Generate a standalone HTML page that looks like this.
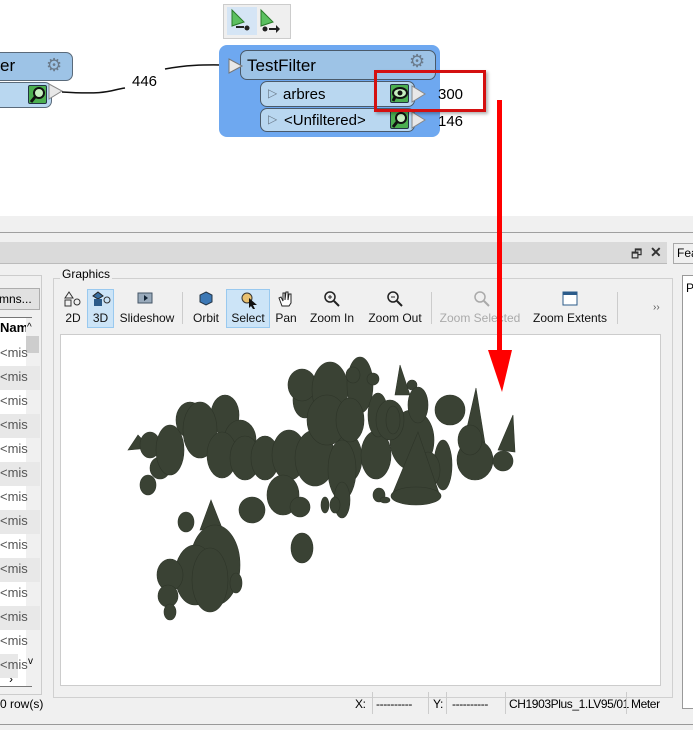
<!DOCTYPE html>
<html><head><style>
*{margin:0;padding:0;box-sizing:border-box}
body{width:693px;height:730px;overflow:hidden;background:#f0f0f0;font-family:"Liberation Sans",sans-serif;position:relative;font-size:12px;color:#000}
.a{position:absolute}
.tb{position:absolute;top:288px;height:40px;text-align:center;font-size:12px;color:#111}
.tb .l{position:absolute;bottom:3px;left:0;right:0;white-space:nowrap}
.row{position:absolute;left:0;width:40px;height:24px;font-size:13px;color:#555;padding-left:0;line-height:22px}
.st{position:absolute;top:697px;font-size:12px;letter-spacing:-0.4px;white-space:nowrap}
</style></head><body>
<!-- top canvas -->
<div class="a" style="left:0;top:0;width:693px;height:216px;background:#fff"></div>
<div class="a" style="left:0;top:232px;width:693px;height:1px;background:#a0a0a0"></div>

<!-- toolbar buttons top -->
<div class="a" style="left:223px;top:4px;width:68px;height:35px;background:#efefef;border:1px solid #ccc"></div>
<div class="a" style="left:227px;top:7px;width:30px;height:28px;background:#d5e5f5"></div>
<svg class="a" style="left:223px;top:4px" width="68" height="35">
<polygon points="9,6 21,18 9,22" fill="#5bc060" stroke="#2a7a2a"/>
<rect x="13" y="22" width="8" height="2" fill="#222"/><circle cx="24" cy="24" r="2.5" fill="#222"/>
<polygon points="38,6 50,18 38,22" fill="#5bc060" stroke="#2a7a2a"/>
<circle cx="42" cy="25" r="2.5" fill="#222"/><rect x="46" y="24" width="7" height="2" fill="#222"/><polygon points="53,21 57,25 53,29" fill="#222"/>
</svg>

<!-- left transformer -->
<div class="a" style="left:-20px;top:52px;width:93px;height:29px;background:#9dc3e6;border:1px solid #5a6a7a;border-radius:7px"></div>
<div class="a" style="left:0;top:56px;font-size:17px">er</div>
<div class="a" style="left:46px;top:55px;font-size:18px;color:#6a7a8a">⚙</div>
<div class="a" style="left:-20px;top:82px;width:72px;height:26px;background:#b9d7f0;border:1px solid #5a6a7a;border-radius:7px"></div>
<div class="a" style="left:28px;top:85px;width:19px;height:19px;background:#4caf50;border:1px solid #234;border-radius:2px"></div>
<svg class="a" style="left:28px;top:85px" width="20" height="20"><circle cx="11" cy="8" r="5" fill="#c6f0c0" stroke="#111" stroke-width="2"/><line x1="7" y1="12" x2="3" y2="17" stroke="#111" stroke-width="3"/></svg>
<svg class="a" style="left:0;top:55px" width="240" height="50">
<polygon points="49,29 62,36 49,44" fill="#e8e8e8" stroke="#888"/>
<path d="M62,37 C110,40 110,35 125,33" stroke="#111" stroke-width="1.5" fill="none"/>
<path d="M165,14 C190,9 210,10 228,10" stroke="#111" stroke-width="1.5" fill="none"/>
</svg>
<div class="a" style="left:132px;top:73px;font-size:15px">446</div>

<!-- TestFilter -->
<div class="a" style="left:219px;top:45px;width:221px;height:92px;background:#6ea8f0;border-radius:8px"></div>
<div class="a" style="left:240px;top:50px;width:196px;height:30px;background:#9dc3e6;border:1px solid #4a5a6a;border-radius:7px"></div>
<svg class="a" style="left:228px;top:58px" width="16" height="16"><polygon points="1,1 14,8 1,15" fill="#e8e8e8" stroke="#777"/></svg>
<div class="a" style="left:247px;top:56px;font-size:17px">TestFilter</div>
<div class="a" style="left:409px;top:51px;font-size:18px;color:#6a7a8a">⚙</div>
<div class="a" style="left:260px;top:81px;width:155px;height:26px;background:#b9d7f0;border:1px solid #4a5a6a;border-radius:7px"></div>
<div class="a" style="left:260px;top:108px;width:155px;height:24px;background:#b9d7f0;border:1px solid #4a5a6a;border-radius:7px"></div>
<div class="a" style="left:268px;top:86px;font-size:12px;color:#6a7a8a">▷</div>
<div class="a" style="left:283px;top:86px;font-size:15px">arbres</div>
<div class="a" style="left:268px;top:112px;font-size:12px;color:#6a7a8a">▷</div>
<div class="a" style="left:284px;top:112px;font-size:15px">&lt;Unfiltered&gt;</div>
<div class="a" style="left:390px;top:84px;width:19px;height:19px;background:#4caf50;border:1px solid #234;border-radius:2px"></div>
<svg class="a" style="left:390px;top:84px" width="20" height="20"><ellipse cx="10" cy="9" rx="7" ry="5" fill="#c6f0c0" stroke="#111" stroke-width="2"/><circle cx="10" cy="9" r="2.5" fill="#111"/><line x1="5" y1="13" x2="3" y2="17" stroke="#111" stroke-width="3"/></svg>
<div class="a" style="left:390px;top:110px;width:19px;height:19px;background:#4caf50;border:1px solid #234;border-radius:2px"></div>
<svg class="a" style="left:390px;top:110px" width="20" height="20"><circle cx="11" cy="8" r="5" fill="#c6f0c0" stroke="#111" stroke-width="2"/><line x1="7" y1="12" x2="3" y2="17" stroke="#111" stroke-width="3"/></svg>
<svg class="a" style="left:411px;top:85px" width="16" height="45"><polygon points="1,1 14,9 1,17" fill="#e8e8e8" stroke="#888"/><polygon points="1,27 14,35 1,43" fill="#e8e8e8" stroke="#888"/></svg>
<div class="a" style="left:438px;top:86px;font-size:15px">300</div>
<div class="a" style="left:438px;top:113px;font-size:15px">146</div>

<!-- panel title bar -->
<div class="a" style="left:0;top:242px;width:667px;height:22px;background:#dadada;border-bottom:1px solid #bbb"></div>
<div class="a" style="left:631px;top:245px;font-size:12px;color:#333">🗗</div>
<div class="a" style="left:650px;top:244px;font-size:14px;color:#333;font-weight:bold">✕</div>
<div class="a" style="left:673px;top:243px;width:22px;height:21px;background:#f0f0f0;border:1px solid #aaa"></div>
<div class="a" style="left:677px;top:246px;font-size:12px">Fea</div>
<div class="a" style="left:682px;top:275px;width:15px;height:434px;background:#fff;border:1px solid #999"></div>
<div class="a" style="left:686px;top:281px;font-size:12px">P</div>

<!-- left table -->
<div class="a" style="left:-10px;top:275px;width:52px;height:420px;border:1px solid #ccc;background:#f0f0f0"></div>
<div class="a" style="left:-10px;top:288px;width:50px;height:22px;background:#e1e1e1;border:1px solid #adadad;font-size:12px;padding:3px 0 0 8px">mns...</div>
<div class="a" style="left:-5px;top:317px;width:37px;height:370px;border:1px solid #777;background:#fff"></div>
<div class="a" style="left:0;top:320px;font-weight:bold;font-size:13px">Nam</div>
<div class="a" style="left:26px;top:318px;width:14px;height:368px;background:#f0f0f0"></div>
<div class="a" style="left:27px;top:322px;font-size:10px">^</div>
<div class="a" style="left:26px;top:336px;width:13px;height:17px;background:#cdcdcd"></div>
<div class="a" style="left:28px;top:656px;font-size:10px">v</div>
<div class="a" style="left:9px;top:672px;font-size:12px">›</div>
<div class="row" style="top:342px">&lt;mis</div>
<div class="row" style="top:366px;background:#e8e8e8">&lt;mis</div>
<div class="row" style="top:390px">&lt;mis</div>
<div class="row" style="top:414px;background:#e8e8e8">&lt;mis</div>
<div class="row" style="top:438px">&lt;mis</div>
<div class="row" style="top:462px;background:#e8e8e8">&lt;mis</div>
<div class="row" style="top:486px">&lt;mis</div>
<div class="row" style="top:510px;background:#e8e8e8">&lt;mis</div>
<div class="row" style="top:534px">&lt;mis</div>
<div class="row" style="top:558px;background:#e8e8e8">&lt;mis</div>
<div class="row" style="top:582px">&lt;mis</div>
<div class="row" style="top:606px;background:#e8e8e8">&lt;mis</div>
<div class="row" style="top:630px">&lt;mis</div>
<div class="row" style="top:654px;background:#e8e8e8;width:18px">&lt;mis</div>
<div class="a" style="left:0;top:697px;font-size:12px">0 row(s)</div>

<!-- graphics group -->
<div class="a" style="left:53px;top:278px;width:620px;height:420px;border:1px solid #d0d0d0"></div>
<div class="a" style="left:60px;top:267px;font-size:12px;background:#f0f0f0;padding:0 2px">Graphics</div>
<div class="a" style="left:0;top:724px;width:693px;height:1px;background:#999"></div>

<!-- toolbar -->
<div class="a" style="left:87px;top:289px;width:27px;height:39px;background:#cce4f7;border:1px solid #99c9ef"></div>
<div class="a" style="left:226px;top:289px;width:44px;height:39px;background:#cce4f7;border:1px solid #99c9ef"></div>
<div class="a" style="left:182px;top:292px;width:1px;height:32px;background:#ccc"></div>
<div class="a" style="left:431px;top:292px;width:1px;height:32px;background:#ccc"></div>
<div class="a" style="left:617px;top:292px;width:1px;height:32px;background:#ccc"></div>
<svg class="a" style="left:60px;top:290px" width="600" height="20">
<polygon points="9,2 13,8 5,8" fill="none" stroke="#333"/><rect x="5" y="10" width="6" height="6" fill="none" stroke="#333"/><circle cx="17" cy="12" r="3" fill="none" stroke="#333"/>
<polygon points="38,2 43,6 38,9 33,6" fill="#3a6fa0" stroke="#222"/><rect x="34" y="9" width="8" height="7" fill="#2b5b8a"/><circle cx="47" cy="10" r="3" fill="none" stroke="#333"/>
<rect x="78" y="3" width="14" height="10" fill="#9ab" stroke="#456"/><polygon points="84,5 88,8 84,11" fill="#123"/>
<polygon points="146,2 152,5 152,12 146,15 140,12 140,5" fill="#3c78b5" stroke="#234"/>
<circle cx="187" cy="8" r="5" fill="#e8c070" stroke="#333"/><polygon points="189,8 197,15 193,15 195,19 193,19 191,16 189,18" fill="#111"/>
<path d="M222,16 L219,8 L221,7 L223,11 L223,3 L225,3 L225,10 L226,2 L228,2 L228,10 L229,4 L231,4 L231,13 L229,16Z" fill="#fff" stroke="#222"/>
<circle cx="270" cy="7" r="5" fill="none" stroke="#222" stroke-width="1.5"/><line x1="274" y1="11" x2="279" y2="16" stroke="#222" stroke-width="2"/><line x1="268" y1="7" x2="272" y2="7" stroke="#222"/><line x1="270" y1="5" x2="270" y2="9" stroke="#222"/>
<circle cx="333" cy="7" r="5" fill="none" stroke="#222" stroke-width="1.5"/><line x1="337" y1="11" x2="342" y2="16" stroke="#222" stroke-width="2"/><line x1="331" y1="7" x2="335" y2="7" stroke="#222"/>
<circle cx="420" cy="7" r="5" fill="none" stroke="#aaa" stroke-width="1.5"/><line x1="424" y1="11" x2="429" y2="16" stroke="#aaa" stroke-width="2"/>
<rect x="503" y="2" width="14" height="13" fill="#fff" stroke="#2b5b8a"/><rect x="503" y="2" width="14" height="3" fill="#2b5b8a"/>
</svg>
<div class="tb" style="left:62px;width:22px"><span class="l">2D</span></div>
<div class="tb" style="left:88px;width:25px"><span class="l">3D</span></div>
<div class="tb" style="left:116px;width:62px"><span class="l">Slideshow</span></div>
<div class="tb" style="left:188px;width:36px"><span class="l">Orbit</span></div>
<div class="tb" style="left:227px;width:42px"><span class="l">Select</span></div>
<div class="tb" style="left:272px;width:28px"><span class="l">Pan</span></div>
<div class="tb" style="left:304px;width:56px"><span class="l">Zoom In</span></div>
<div class="tb" style="left:364px;width:62px"><span class="l">Zoom Out</span></div>
<div class="tb" style="left:436px;width:88px;color:#aaa"><span class="l">Zoom Selected</span></div>
<div class="tb" style="left:528px;width:84px"><span class="l">Zoom Extents</span></div>
<div class="a" style="left:653px;top:302px;font-size:10px;color:#555">››</div>

<!-- viewport -->
<div class="a" style="left:60px;top:334px;width:601px;height:352px;background:#fff;border:1px solid #ccc"></div>
<svg class="a" style="left:0;top:0" width="693" height="730">
<g fill="#3a4234" stroke="#2e3529" stroke-width="0.6">
<polygon points="128,450 138,435 150,448"/><polygon points="200,530 211,500 222,528"/>
<polygon points="400,365 410,395 395,395"/><polygon points="462,450 476,388 486,450"/><polygon points="498,450 513,415 515,452"/>
<ellipse cx="150" cy="445" rx="10" ry="13"/><ellipse cx="148" cy="485" rx="8" ry="10"/><ellipse cx="160" cy="468" rx="10" ry="11"/>
<ellipse cx="170" cy="450" rx="14" ry="25"/><ellipse cx="190" cy="420" rx="14" ry="18"/><ellipse cx="225" cy="415" rx="14" ry="20"/><ellipse cx="200" cy="430" rx="17" ry="28"/>
<ellipse cx="240" cy="440" rx="16" ry="20"/><ellipse cx="222" cy="455" rx="15" ry="23"/><ellipse cx="245" cy="458" rx="15" ry="22"/>
<ellipse cx="265" cy="458" rx="14" ry="22"/><ellipse cx="289" cy="455" rx="17" ry="25"/><ellipse cx="305" cy="400" rx="12" ry="18"/>
<ellipse cx="315" cy="458" rx="20" ry="28"/><ellipse cx="348" cy="458" rx="14" ry="24"/><ellipse cx="376" cy="455" rx="15" ry="24"/>
<ellipse cx="302" cy="385" rx="14" ry="16"/><ellipse cx="330" cy="390" rx="18" ry="28"/><ellipse cx="360" cy="385" rx="13" ry="28"/>
<ellipse cx="327" cy="420" rx="20" ry="25"/><ellipse cx="350" cy="420" rx="14" ry="22"/><ellipse cx="412" cy="440" rx="22" ry="30"/>
<ellipse cx="378" cy="415" rx="10" ry="22"/><ellipse cx="342" cy="470" rx="14" ry="30"/><ellipse cx="342" cy="500" rx="8" ry="18"/>
<ellipse cx="353" cy="375" rx="7" ry="8"/><ellipse cx="373" cy="379" rx="6" ry="6"/><ellipse cx="412" cy="385" rx="5" ry="5"/>
<ellipse cx="390" cy="420" rx="14" ry="20"/><ellipse cx="393" cy="420" rx="7" ry="14"/>
<ellipse cx="418" cy="405" rx="10" ry="18"/><ellipse cx="450" cy="410" rx="15" ry="15"/><ellipse cx="443" cy="465" rx="9" ry="25"/>
<ellipse cx="475" cy="460" rx="18" ry="20"/><ellipse cx="503" cy="461" rx="10" ry="10"/><ellipse cx="470" cy="440" rx="12" ry="15"/>
<ellipse cx="428" cy="470" rx="12" ry="18"/>
<polygon points="392,495 418,432 440,496"/><ellipse cx="416" cy="496" rx="25" ry="9"/>
<ellipse cx="283" cy="495" rx="16" ry="20"/><ellipse cx="252" cy="510" rx="13" ry="13"/><ellipse cx="300" cy="507" rx="10" ry="10"/>
<ellipse cx="325" cy="505" rx="4" ry="8"/><ellipse cx="335" cy="505" rx="5" ry="8"/><ellipse cx="379" cy="495" rx="6" ry="7"/>
<ellipse cx="385" cy="500" rx="5" ry="3"/><ellipse cx="302" cy="548" rx="11" ry="15"/>
<ellipse cx="186" cy="522" rx="8" ry="10"/><ellipse cx="215" cy="565" rx="25" ry="40"/><ellipse cx="195" cy="575" rx="20" ry="30"/>
<ellipse cx="210" cy="580" rx="18" ry="32"/><ellipse cx="170" cy="575" rx="13" ry="16"/><ellipse cx="168" cy="596" rx="10" ry="11"/>
<ellipse cx="170" cy="612" rx="6" ry="8"/><ellipse cx="236" cy="583" rx="6" ry="10"/>
</g>
</svg>

<!-- status bar -->
<div class="st" style="left:355px">X:</div>
<div class="a" style="left:372px;top:692px;width:1px;height:22px;background:#ccc"></div>
<div class="st" style="left:376px">----------</div>
<div class="a" style="left:428px;top:692px;width:1px;height:22px;background:#ccc"></div>
<div class="st" style="left:433px">Y:</div>
<div class="a" style="left:446px;top:692px;width:1px;height:22px;background:#ccc"></div>
<div class="st" style="left:452px">----------</div>
<div class="a" style="left:505px;top:692px;width:1px;height:22px;background:#ccc"></div>
<div class="st" style="left:509px">CH1903Plus_1.LV95/01</div>
<div class="a" style="left:626px;top:692px;width:1px;height:22px;background:#ccc"></div>
<div class="st" style="left:631px">Meter</div>

<!-- red highlight + arrow on top -->
<div class="a" style="left:374px;top:70px;width:112px;height:42px;border:3px solid #d41010;box-shadow:2px 2px 3px rgba(0,0,0,.3)"></div>
<div class="a" style="left:497px;top:100px;width:5px;height:260px;background:#f00"></div>
<svg class="a" style="left:488px;top:350px" width="25" height="45"><polygon points="0,0 24,0 14,42" fill="#f00"/></svg>
</body></html>
